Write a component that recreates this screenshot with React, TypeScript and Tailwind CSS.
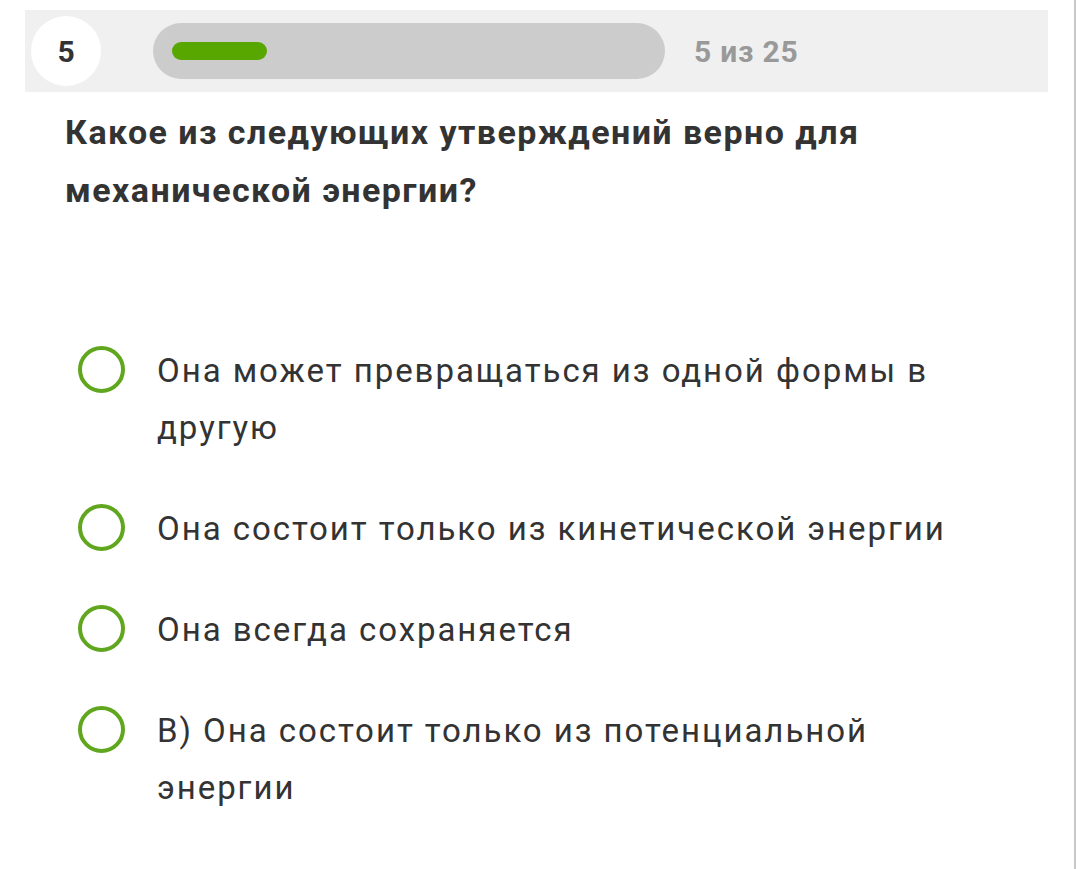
import React from "react";

const options = [
  "Она может превращаться из одной формы в другую",
  "Она состоит только из кинетической энергии",
  "Она всегда сохраняется",
  "В) Она состоит только из потенциальной энергии",
];

export default function App() {
  return (
    <div
      className="flex h-[869px] w-[1076px] bg-white text-[#333333]"
      style={{ fontFamily: "Roboto, 'Noto Sans', sans-serif" }}
    >
      <div className="flex-1 pt-[10px] pl-[25px] pr-[26px]">
        <div className="flex h-[82px] items-center bg-[#f0f0f0] pl-[6px]">
          <div className="flex h-[70px] w-[70px] items-center justify-center rounded-full bg-white text-[30px] font-bold text-[#333333]">
            5
          </div>
          <div className="ml-[52px] flex h-[56px] w-[512px] items-center rounded-full bg-[#cccccc] pl-[19px]">
            <div className="h-[18px] w-[95px] rounded-full bg-[#58a700]" />
          </div>
          <div className="ml-[29px] text-[30px] font-bold tracking-[0.8px] text-[#999999]">5 из 25</div>
        </div>
        <div className="mt-[11px] pl-[40px] text-[34px] font-bold leading-[58px] tracking-[1.45px] text-[#333333]">
          Какое из следующих утверждений верно для
          <br />
          механической энергии?
        </div>
        <div className="mt-[123px] flex flex-col gap-[44px] pl-[53px]">
          {options.map((o, i) => (
            <div key={i} className="flex items-start">
              <div className="mt-[4px] h-[47px] w-[47px] shrink-0 rounded-full border-[4.5px] border-[#60a61f]" />
              <div className="ml-[32px] w-[810px] text-[33px] leading-[57px] tracking-[1.95px] text-[#333333]">{o}</div>
            </div>
          ))}
        </div>
      </div>
      <div className="w-[2px] bg-[#c8c8c8]" />
    </div>
  );
}
